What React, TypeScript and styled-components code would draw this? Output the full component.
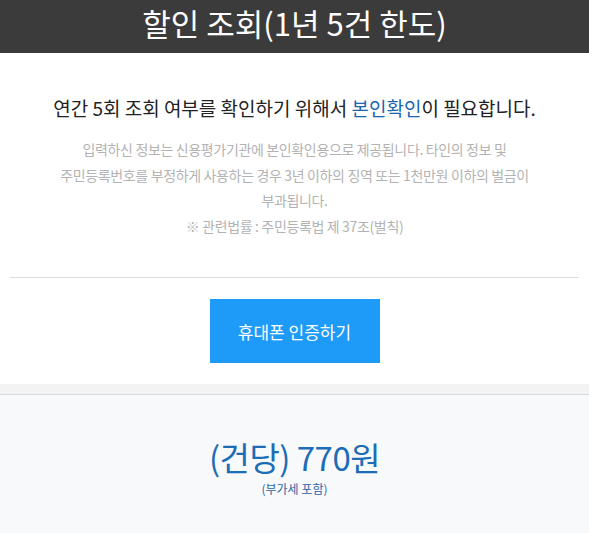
import React from "react";
import styled, { createGlobalStyle } from "styled-components";

const Global = createGlobalStyle`
  html, body { margin: 0; padding: 0; background: #f8f9fb; }
  body { font-family: "Noto Sans CJK KR", "Noto Sans", sans-serif; }
`;

const Page = styled.div`
  width: 589px;
  min-height: 533px;
  background: #f8f9fb;
  overflow: hidden;
`;

const Header = styled.header`
  height: 53px;
  background: #3b3b3b;
  display: flex;
  justify-content: center;
  align-items: flex-start;
`;

const Title = styled.h1`
  margin: 0;
  color: #fff;
  font-size: 31px;
  font-weight: 400;
  line-height: 45px;
`;

const Body = styled.section`
  background: #fff;
  padding: 0 10px;
  display: flex;
  flex-direction: column;
  align-items: center;
`;

const Lead = styled.p`
  margin: 42px 0 0;
  font-size: 19px;
  line-height: 26px;
  color: #222;
`;

const Hl = styled.span`
  color: #1a64b0;
`;

const Notice = styled.p<{ $top: number }>`
  margin: ${(p) => p.$top}px 0 0;
  font-size: 14px;
  line-height: 25.5px;
  color: #b3b3b3;
  text-align: center;
  letter-spacing: -0.35px;
`;

const Divider = styled.hr`
  align-self: stretch;
  margin: 38px 0 0;
  border: 0;
  border-top: 1px solid #dcdcdc;
`;

const CertButton = styled.button`
  margin: 21px 0 21px;
  width: 170px;
  height: 64px;
  border: 0;
  background: #1e9bf8;
  color: #fff;
  font-family: inherit;
  font-size: 17px;
  cursor: pointer;
`;

const Band = styled.div`
  height: 10px;
  background: #f3f3f3;
  border-bottom: 1px solid #d9d9d9;
`;

const PriceBox = styled.section`
  display: flex;
  flex-direction: column;
  align-items: center;
  padding-top: 39px;
`;

const Price = styled.div`
  font-size: 33px;
  line-height: 46px;
  color: #1c6db6;
  letter-spacing: -0.5px;
`;

const Vat = styled.div`
  font-size: 12px;
  line-height: 18px;
  color: #2a63a8;
`;

export default function App() {
  return (
    <Page>
      <Global />
      <Header>
        <Title>할인 조회(1년 5건 한도)</Title>
      </Header>
      <Body>
        <Lead>
          연간 5회 조회 여부를 확인하기 위해서 <Hl>본인확인</Hl>이 필요합니다.
        </Lead>
        <Notice $top={16}>
          입력하신 정보는 신용평가기관에 본인확인용으로 제공됩니다. 타인의 정보 및
          <br />
          주민등록번호를 부정하게 사용하는 경우 3년 이하의 징역 또는 1천만원 이하의 벌금이
          <br />
          부과됩니다.
        </Notice>
        <Notice $top={0}>※ 관련법률 : 주민등록법 제 37조(벌칙)</Notice>
        <Divider />
        <CertButton>휴대폰 인증하기</CertButton>
      </Body>
      <Band />
      <PriceBox>
        <Price>(건당) 770원</Price>
        <Vat>(부가세 포함)</Vat>
      </PriceBox>
    </Page>
  );
}
